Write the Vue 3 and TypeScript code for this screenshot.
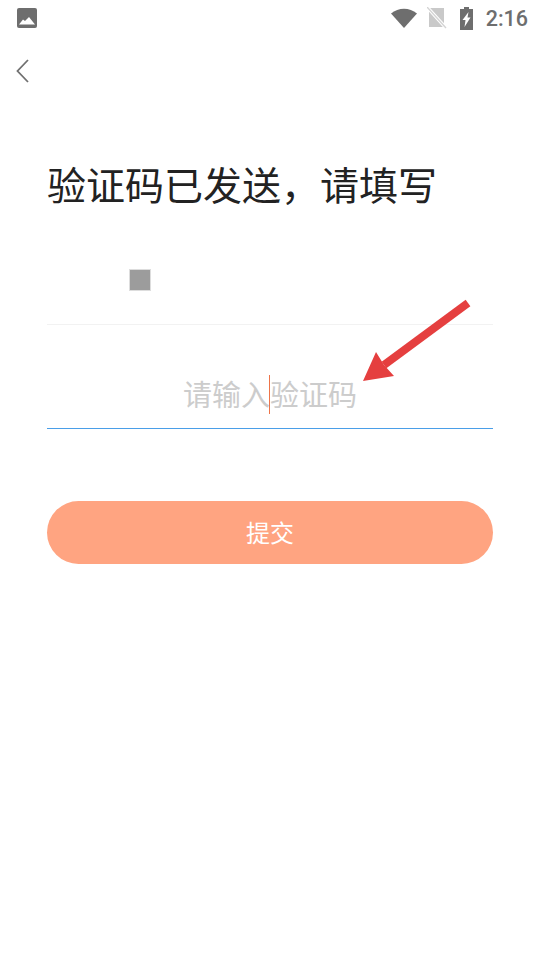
<script setup lang="ts">
const title = '验证码已发送，请填写'
</script>

<template>
  <div class="page">
    <div class="status-bar">
      <svg class="pic-icon" width="22" height="22" viewBox="0 0 22 22">
        <rect x="1" y="1" width="20" height="20" rx="2" fill="#6e6e6e" />
        <path d="M3 17.5 L7 12.5 L9 14 L13 10 L19 17.5 Z" fill="#fff" />
      </svg>
      <div class="status-right">
        <svg class="wifi" width="26" height="20" viewBox="0 0 26 20">
          <path d="M0 5.5 C7.5 -1 18.5 -1 26 5.5 L13 20 Z" fill="#6e6e6e" />
        </svg>
        <svg class="sim" width="20" height="22" viewBox="0 0 20 22">
          <path d="M2 1 H17 V20 H2 Z" fill="#c9c9c9" />
          <path d="M0 0 L19 21" stroke="#fff" stroke-width="3.4" />
          <path d="M0 0 L19 21" stroke="#d4d4d4" stroke-width="1.4" />
        </svg>
        <svg width="13" height="23" viewBox="0 0 13 23">
          <path d="M4 0 H9 V2 H13 V23 H0 V2 H4 Z" fill="#6e6e6e" />
          <path d="M8.5 5 L2.5 13 H5.5 L4.5 20 L10.5 10.5 H7.5 Z" fill="#fff" />
        </svg>
        <span class="clock">2:16</span>
      </div>
    </div>

    <div class="nav">
      <svg width="14" height="24" viewBox="0 0 14 24">
        <path d="M12 1 L1.5 12 L12 23" fill="none" stroke="#707070" stroke-width="1.8" />
      </svg>
    </div>

    <main class="content">
      <h1 class="title">{{ title }}</h1>

      <div class="phone-row">
        <span class="phone-mask"></span>
      </div>

      <div class="code-row">
        <span class="placeholder">请输入</span><span class="caret"></span><span class="placeholder">验证码</span>
        <svg class="arrow" width="110" height="86" viewBox="0 0 110 86">
          <path d="M107 5 L23 67" stroke="#e53f3f" stroke-width="8" fill="none" />
          <path d="M2 83 L15 54 L23 67 L33 78 Z" fill="#e53f3f" />
        </svg>
      </div>

      <button class="submit" type="button">提交</button>
    </main>
  </div>
</template>

<style>
html,
body {
  margin: 0;
  background: #fff;
}
</style>

<style scoped>
.page {
  width: 540px;
  height: 960px;
  overflow: hidden;
  background: #fff;
  font-family: "Roboto", "Noto Sans CJK SC", sans-serif;
}

.status-bar {
  height: 36px;
  display: flex;
  align-items: center;
  justify-content: space-between;
  padding: 0 12px 0 16px;
}

.status-right {
  display: flex;
  align-items: center;
  gap: 12px;
}

.wifi {
  margin-right: -2px;
}

.sim {
  margin-right: 1px;
}

.clock {
  font-size: 21.5px;
  font-weight: 500;
  color: #6e6e6e;
  margin-left: 1px;
}

.nav {
  height: 70px;
  padding-left: 16px;
  display: flex;
  align-items: center;
}

.content {
  padding: 0 47px;
}

.title {
  margin: 54px 0 0;
  font-size: 39px;
  line-height: 54px;
  font-weight: 400;
  color: #222;
  white-space: nowrap;
}

.phone-row {
  height: 80px;
  margin-top: 31px;
  padding: 24px 0 0 82px;
  box-sizing: border-box;
  border-bottom: 1px solid #f2f2f2;
}

.phone-mask {
  display: block;
  width: 20px;
  height: 20px;
  background: #9c9c9c;
  border: 1px solid #ddd;
}

.code-row {
  position: relative;
  height: 104px;
  padding-top: 36px;
  box-sizing: border-box;
  display: flex;
  justify-content: center;
  align-items: center;
  border-bottom: 1px solid #4a9ee8;
}

.placeholder {
  font-size: 29px;
  line-height: 40px;
  color: #cccccc;
  position: relative;
  top: 1px;
}

.caret {
  width: 1px;
  height: 39px;
  background: #ee7449;
  margin-left: -1px;
}

.arrow {
  position: absolute;
  left: 314px;
  top: -27px;
}

.submit {
  display: block;
  width: 100%;
  height: 63px;
  margin-top: 72px;
  border: 0;
  border-radius: 32px;
  background: #ffa481;
  color: #fff;
  font-family: inherit;
  font-size: 24px;
  padding: 0 0 2px;
}
</style>
